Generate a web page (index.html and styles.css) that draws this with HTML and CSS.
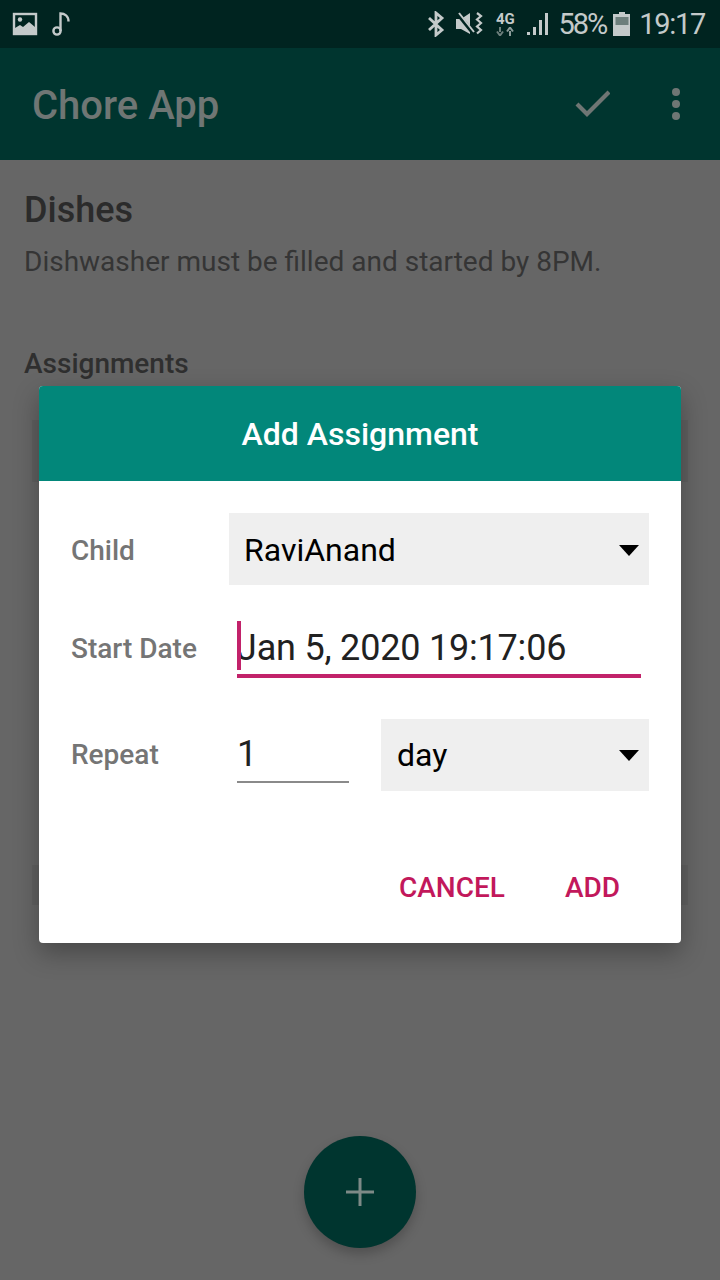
FILE: index.html
```html
<!DOCTYPE html>
<html lang="en">
<head>
  <meta charset="UTF-8">
  <meta name="viewport" content="width=device-width, initial-scale=1.0">
  <title>Chore App</title>
  <link rel="stylesheet" href="styles.css">
</head>
<body>
  <div class="screen">
    <div class="status-bar">
      <div class="status-left">
        <svg class="icon-picture" width="26" height="24" viewBox="0 0 26 24">
          <rect x="2" y="2" width="22" height="20" fill="#002420" stroke="#c4caca" stroke-width="2.4"/>
          <circle cx="8" cy="7.5" r="2.2" fill="#c4caca"/>
          <path d="M3 21v-5l5-3 3 2 6-5 6 5v6z" fill="#c4caca"/>
        </svg>
        <svg class="icon-note" width="22" height="26" viewBox="0 0 22 26">
          <circle cx="6" cy="20" r="3.6" fill="none" stroke="#c4caca" stroke-width="2.4"/>
          <path d="M9.500 20V2.500c4 0 8 2.500 8 8" fill="none" stroke="#c4caca" stroke-width="2.4"/>
        </svg>
      </div>
      <div class="status-right">
        <svg class="icon-bt" width="18" height="26" viewBox="0 0 18 26">
          <path d="M2 7l13 12-6 5V2l6 5L2 19" fill="none" stroke="#c4caca" stroke-width="2.8"/>
        </svg>
        <svg class="icon-mute" width="28" height="24" viewBox="0 0 28 24">
          <path d="M1 7h5l9-6v21l-9-5H1z" fill="#c4caca"/>
          <path d="M2 1l17 21" stroke="#002420" stroke-width="4"/>
          <path d="M4 1l15 19" stroke="#c4caca" stroke-width="2"/>
          <path d="M22 1l4 3-4 3.500 4 3.500-4 3.500 4 3.500-4 3.500" fill="none" stroke="#c4caca" stroke-width="2.2"/>
        </svg>
        <div class="net">
          <span class="net-label">4G</span>
          <svg width="20" height="9" viewBox="0 0 20 9">
            <path d="M5 0v5M2 4.500l3 4 3-4" fill="none" stroke="#6d7f7c" stroke-width="2"/>
            <path d="M15 9V4M12 4.500l3-4 3 4" fill="none" stroke="#8d9c9a" stroke-width="2"/>
          </svg>
        </div>
        <svg class="icon-signal" width="26" height="24" viewBox="0 0 26 24">
          <rect x="1" y="20" width="3" height="3" fill="#c4caca"/>
          <rect x="7" y="15" width="3" height="8" fill="#c4caca"/>
          <rect x="13" y="8" width="3" height="15" fill="#c4caca"/>
          <rect x="19" y="1" width="3" height="22" fill="#c4caca"/>
        </svg>
        <span class="battery-text">58%</span>
        <svg class="icon-battery" width="18" height="26" viewBox="0 0 18 26">
          <path d="M6 1h6v2h5v22H0V3h6z" fill="#c4caca"/>
          <rect x="2.500" y="6" width="13" height="8" fill="#6d7f7c"/>
        </svg>
        <span class="clock">19:17</span>
      </div>
    </div>

    <div class="toolbar">
      <span class="toolbar-title">Chore App</span>
      <div class="toolbar-actions">
        <svg width="36" height="28" viewBox="0 0 36 28">
          <path d="M3 14l10 10L35 2" fill="none" stroke="#6f7674" stroke-width="4.200"/>
        </svg>
        <div class="more">
          <span></span><span></span><span></span>
        </div>
      </div>
    </div>

    <div class="content">
      <h2 class="chore-name">Dishes</h2>
      <p class="chore-desc">Dishwasher must be filled and started by 8PM.</p>
      <h3 class="assign-head">Assignments</h3>
      <div class="card card-first"></div>
      <div class="card card-second"></div>
    </div>

    <button class="fab">
      <svg width="30" height="30" viewBox="0 0 30 30">
        <path d="M15 1v28M1 15h28" stroke="#7d8a87" stroke-width="3"/>
      </svg>
    </button>

    <div class="dialog">
      <div class="dialog-title">Add Assignment</div>
      <div class="dialog-body">
        <div class="row row-child">
          <span class="row-label">Child</span>
          <div class="spinner spinner-wide">
            <span>RaviAnand</span>
            <i class="arrow"></i>
          </div>
        </div>
        <div class="row row-date">
          <span class="row-label">Start Date</span>
          <div class="date-input">
            <i class="cursor"></i>
            <span>Jan 5, 2020 19:17:06</span>
          </div>
        </div>
        <div class="row row-repeat">
          <span class="row-label">Repeat</span>
          <div class="num-input">1</div>
          <div class="spinner spinner-unit">
            <span>day</span>
            <i class="arrow"></i>
          </div>
        </div>
      </div>
      <div class="dialog-actions">
        <span class="action">CANCEL</span>
        <span class="action">ADD</span>
      </div>
    </div>
  </div>
</body>
</html>
```

FILE: styles.css
```css
* {
  margin: 0;
  padding: 0;
  box-sizing: border-box;
}

body {
  font-family: Roboto, "Liberation Sans", sans-serif;
  background-color: #666666;
}

.screen {
  position: relative;
  width: 720px;
  height: 1280px;
  overflow: hidden;
  background-color: #666666;
}

.status-bar {
  height: 48px;
  background-color: #002420;
  color: #c4caca;
  display: flex;
  justify-content: space-between;
  align-items: center;
  padding: 0 15px 0 12px;
}

.status-left, .status-right {
  display: flex;
  align-items: center;
}

.status-left {
  gap: 13px;
}

.icon-bt {
  margin-right: 10px;
}

.icon-mute {
  margin-right: 11px;
}

.net {
  display: flex;
  flex-direction: column;
  align-items: center;
  width: 22px;
  margin-right: 10px;
}

.net-label {
  font-size: 15px;
  font-weight: 700;
  line-height: 15px;
}

.icon-signal {
  margin-right: 6px;
}

.battery-text, .clock {
  font-size: 29px;
  letter-spacing: -1.3px;
}

.battery-text {
  margin-right: 7px;
  letter-spacing: -2px;
}

.icon-battery {
  margin-right: 8px;
}

.toolbar {
  height: 112px;
  background-color: #00352f;
  display: flex;
  justify-content: space-between;
  align-items: center;
  padding: 0 40px 0 32px;
}

.toolbar-title {
  padding-top: 2px;
  font-size: 40px;
  font-weight: 500;
  color: #6f7674;
}

.toolbar-actions {
  display: flex;
  align-items: center;
  gap: 62px;
}

.more {
  display: flex;
  flex-direction: column;
  gap: 4px;
}

.more span {
  width: 8px;
  height: 8px;
  border-radius: 50%;
  background-color: #6f7674;
}

.content {
  padding: 29px 24px 0;
}

.chore-name {
  font-size: 36px;
  font-weight: 500;
  line-height: 42px;
  color: #2b2b2b;
}

.chore-desc {
  font-size: 28px;
  line-height: 34px;
  margin-top: 14px;
  color: #353535;
}

.assign-head {
  font-size: 28px;
  font-weight: 500;
  line-height: 34px;
  margin-top: 68px;
  color: #2f2f2f;
}

.card {
  margin: 0 8px;
  background-color: #606060;
}

.card-first {
  height: 62px;
  margin-top: 39px;
}

.card-second {
  height: 40px;
  margin-top: 383px;
}

.fab {
  position: absolute;
  left: 304px;
  top: 1136px;
  width: 112px;
  height: 112px;
  border: none;
  border-radius: 50%;
  background-color: #00352f;
  box-shadow: 0 6px 12px rgba(0, 0, 0, 0.22);
  display: flex;
  align-items: center;
  justify-content: center;
}

.dialog {
  position: absolute;
  left: 39px;
  top: 386px;
  width: 642px;
  height: 557px;
  background-color: #ffffff;
  border-radius: 4px;
  overflow: hidden;
  display: flex;
  flex-direction: column;
  box-shadow: 0 10px 26px rgba(0, 0, 0, 0.3);
}

.dialog-title {
  height: 95px;
  background-color: #02877a;
  color: #ffffff;
  font-size: 32px;
  font-weight: 500;
  display: flex;
  align-items: center;
  justify-content: center;
}

.dialog-body {
  padding: 32px 32px 0;
}

.row {
  display: flex;
  align-items: center;
}

.row-label {
  width: 158px;
  flex-shrink: 0;
  font-size: 28px;
  font-weight: 500;
  color: #757575;
}

.row-child .row-label {
  padding-top: 2px;
}

.row-date .row-label {
  padding-top: 8px;
}

.row-repeat .row-label {
  padding-bottom: 2px;
}

.spinner {
  height: 72px;
  background-color: #efefef;
  color: #000000;
  font-size: 32px;
  display: flex;
  align-items: center;
  justify-content: space-between;
  padding: 0 10px 0 16px;
}

.spinner-wide {
  width: 420px;
  padding: 2px 10px 0 15px;
}

.spinner-unit {
  width: 268px;
  margin-left: 32px;
}

.arrow {
  width: 0;
  height: 0;
  border-left: 10px solid transparent;
  border-right: 10px solid transparent;
  border-top: 11px solid #000000;
}

.row-date {
  margin-top: 25px;
}

.date-input {
  position: relative;
  width: 404px;
  height: 68px;
  margin-left: 8px;
  padding-top: 8px;
  border-bottom: 4px solid #c2226a;
  font-size: 36px;
  line-height: 60px;
  letter-spacing: -0.2px;
  color: #212121;
}

.cursor {
  position: absolute;
  left: 0;
  top: 11px;
  width: 4px;
  height: 49px;
  background-color: #c2226a;
}

.row-repeat {
  margin-top: 41px;
}

.num-input {
  align-self: flex-start;
  width: 112px;
  height: 64px;
  margin-left: 8px;
  border-bottom: 2px solid #8a8a8a;
  font-size: 36px;
  line-height: 70px;
  color: #212121;
}

.dialog-actions {
  display: flex;
  justify-content: flex-end;
  gap: 60px;
  padding: 80px 61px 0 0;
}

.action {
  font-size: 28px;
  font-weight: 500;
  color: #c2185b;
}
```
